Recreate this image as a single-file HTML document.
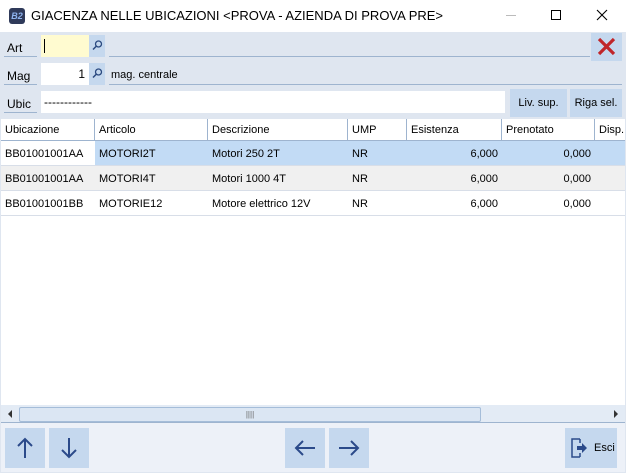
<!DOCTYPE html>
<html><head><meta charset="utf-8"><style>
*{box-sizing:border-box;margin:0;padding:0}
body{width:626px;height:473px;overflow:hidden;font-family:"Liberation Sans",sans-serif;font-size:11px;color:#000;background:#dfe6f0;position:relative}
.a{position:absolute}
.lbl{border-bottom:1px solid #9eb4cf;padding:6px 0 0 3px;font-size:12px;height:22px}
.btn{background:#c5d8ee}
.cell{position:absolute;top:0;height:100%;padding:5px 4px;white-space:nowrap;overflow:hidden;font-size:11px}
</style></head><body>
<div class="a" style="left:0;top:0;width:626px;height:32px;background:#fff"></div>
<div class="a" style="left:9px;top:8px;width:16px;height:16px;background:#2f3a5a;border-radius:3px;color:#8fb4f0;font-size:9px;font-style:italic;font-weight:bold;text-align:center;line-height:16px">B2</div>
<div class="a" style="left:31px;top:8px;font-size:13px">GIACENZA NELLE UBICAZIONI &lt;PROVA - AZIENDA DI PROVA PRE&gt;</div>
<div class="a" style="left:506px;top:15px;width:10px;height:1px;background:#bbb"></div>
<div class="a" style="left:551px;top:10px;width:10px;height:10px;border:1px solid #000"></div>
<svg class="a" style="left:596px;top:9px" width="12" height="12"><path d="M1 1l10 10M11 1L1 11" stroke="#000" stroke-width="1.1"/></svg>

<div class="a lbl" style="left:4px;top:35px;width:33px">Art</div>
<div class="a" style="left:41px;top:35px;width:48px;height:22px;background:#fffbd0"><div style="margin:4px 0 0 3px;width:1px;height:14px;background:#000"></div></div>
<div class="a btn" style="left:89px;top:35px;width:16px;height:22px"><svg width="16" height="22"><circle cx="9.5" cy="9" r="3" stroke="#2b4a80" stroke-width="1.3" fill="none"/><path d="M7.5 11l-3.5 3.5" stroke="#2b4a80" stroke-width="1.5"/></svg></div>
<div class="a" style="left:109px;top:35px;width:481px;height:22px;border-bottom:1px solid #9eb4cf"></div>
<div class="a btn" style="left:591px;top:33px;width:31px;height:28px"><svg width="31" height="28"><path d="M8 6l15 15M23 6L8 21" stroke="#c0262a" stroke-width="3.2"/></svg></div>

<div class="a lbl" style="left:4px;top:63px;width:33px">Mag</div>
<div class="a" style="left:41px;top:63px;width:48px;height:22px;background:#fff;text-align:right;padding:4px 4px 0 0;font-size:12px">1</div>
<div class="a btn" style="left:89px;top:63px;width:16px;height:22px"><svg width="16" height="22"><circle cx="9.5" cy="9" r="3" stroke="#2b4a80" stroke-width="1.3" fill="none"/><path d="M7.5 11l-3.5 3.5" stroke="#2b4a80" stroke-width="1.5"/></svg></div>
<div class="a" style="left:109px;top:63px;width:513px;height:22px;border-bottom:1px solid #9eb4cf;padding:6px 0 0 2px">mag. centrale</div>

<div class="a lbl" style="left:4px;top:91px;width:33px">Ubic</div>
<div class="a" style="left:41px;top:91px;width:464px;height:22px;background:#fff;padding:4px 0 0 3px;font-size:12px">------------</div>
<div class="a btn" style="left:510px;top:89px;width:57px;height:28px;text-align:center;line-height:28px">Liv. sup.</div>
<div class="a btn" style="left:570px;top:89px;width:52px;height:28px;text-align:center;line-height:28px">Riga sel.</div>

<div class="a" style="left:1px;top:119px;width:624px;height:286px;background:#fff;border-top:1px solid #9eb4cf"></div>
<div class="a" style="left:1px;top:119px;width:624px;height:22px;background:#fff;border-bottom:1px solid #9eb4cf">
<div class="cell" style="left:0;width:94px;border-right:1px solid #9eb4cf">Ubicazione</div>
<div class="cell" style="left:94px;width:113px;border-right:1px solid #9eb4cf">Articolo</div>
<div class="cell" style="left:207px;width:140px;border-right:1px solid #9eb4cf">Descrizione</div>
<div class="cell" style="left:347px;width:59px;border-right:1px solid #9eb4cf">UMP</div>
<div class="cell" style="left:406px;width:95px;border-right:1px solid #9eb4cf">Esistenza</div>
<div class="cell" style="left:501px;width:93px;border-right:1px solid #9eb4cf">Prenotato</div>
<div class="cell" style="left:594px;width:30px">Disp.</div>
</div>
<div class="a" style="left:1px;top:141px;width:624px;height:25px;background:#c2dbf5;border-bottom:1px solid #d8dee8">
<div class="cell" style="left:0;width:94px;background:#fff;padding-top:7px">BB01001001AA</div>
<div class="cell" style="left:94px;padding-top:7px">MOTORI2T</div><div class="cell" style="left:207px;padding-top:7px">Motori 250 2T</div><div class="cell" style="left:347px;padding-top:7px">NR</div>
<div class="cell" style="left:406px;width:95px;text-align:right;padding-top:7px">6,000</div><div class="cell" style="left:501px;width:93px;text-align:right;padding-top:7px">0,000</div></div>
<div class="a" style="left:1px;top:166px;width:624px;height:25px;background:#f0f0f0;border-bottom:1px solid #d8dee8">
<div class="cell" style="left:0;padding-top:7px">BB01001001AA</div>
<div class="cell" style="left:94px;padding-top:7px">MOTORI4T</div><div class="cell" style="left:207px;padding-top:7px">Motori 1000 4T</div><div class="cell" style="left:347px;padding-top:7px">NR</div>
<div class="cell" style="left:406px;width:95px;text-align:right;padding-top:7px">6,000</div><div class="cell" style="left:501px;width:93px;text-align:right;padding-top:7px">0,000</div></div>
<div class="a" style="left:1px;top:191px;width:624px;height:25px;background:#fff;border-bottom:1px solid #d8dee8">
<div class="cell" style="left:0;padding-top:7px">BB01001001BB</div>
<div class="cell" style="left:94px;padding-top:7px">MOTORIE12</div><div class="cell" style="left:207px;padding-top:7px">Motore elettrico 12V</div><div class="cell" style="left:347px;padding-top:7px">NR</div>
<div class="cell" style="left:406px;width:95px;text-align:right;padding-top:7px">6,000</div><div class="cell" style="left:501px;width:93px;text-align:right;padding-top:7px">0,000</div></div>

<div class="a" style="left:1px;top:405px;width:624px;height:18px;background:#e3ebf5;border-bottom:1px solid #9eb4cf"></div>
<div class="a" style="left:8px;top:410px;width:0;height:0;border-top:4px solid transparent;border-bottom:4px solid transparent;border-right:4px solid #333"></div>
<div class="a" style="left:614px;top:410px;width:0;height:0;border-top:4px solid transparent;border-bottom:4px solid transparent;border-left:4px solid #333"></div>
<div class="a" style="left:19px;top:407px;width:462px;height:15px;background:#dbe6f3;border:1px solid #a5bdd9;border-radius:2px;text-align:center;font-size:8px;line-height:13px;color:#666">||||</div>

<div class="a" style="left:1px;top:423px;width:624px;height:49px;background:#edf1f8"></div>
<svg class="a" style="left:5px;top:428px" width="40" height="40"><rect width="40" height="40" fill="#c5d8ee"/><path d="M20 30V11M13 18l7-7 7 7" stroke="#2b4a8a" stroke-width="2" fill="none"/></svg>
<svg class="a" style="left:49px;top:428px" width="40" height="40"><rect width="40" height="40" fill="#c5d8ee"/><path d="M20 10v19M13 22l7 7 7-7" stroke="#2b4a8a" stroke-width="2" fill="none"/></svg>
<svg class="a" style="left:285px;top:428px" width="40" height="40"><rect width="40" height="40" fill="#c5d8ee"/><path d="M30 20H11M18 13l-7 7 7 7" stroke="#2b4a8a" stroke-width="2" fill="none"/></svg>
<svg class="a" style="left:329px;top:428px" width="40" height="40"><rect width="40" height="40" fill="#c5d8ee"/><path d="M10 20h19M22 13l7 7-7 7" stroke="#2b4a8a" stroke-width="2" fill="none"/></svg>
<div class="a btn" style="left:565px;top:428px;width:52px;height:40px"></div>
<svg class="a" style="left:570px;top:437px" width="20" height="22"><path d="M10 2H2v18h8M10 2v4M10 16v4" stroke="#2b4a8a" stroke-width="1.5" fill="none"/><path d="M7 9h5V6l5 5-5 5v-3H7z" fill="#2b4a8a"/></svg>
<div class="a" style="left:594px;top:442px;font-size:11px">Esci</div>
</body></html>
